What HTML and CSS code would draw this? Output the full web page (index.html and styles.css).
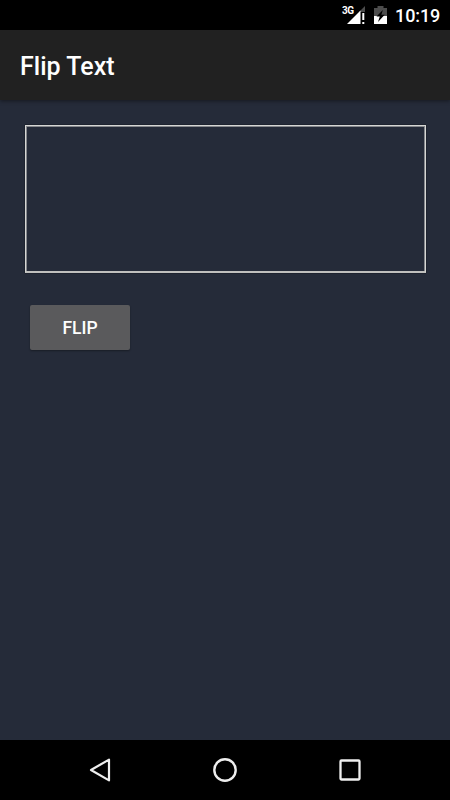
FILE: index.html
```
<!DOCTYPE html>
<html lang="en">
<head>
    <meta charset="UTF-8">
    <meta name="viewport" content="width=device-width, initial-scale=1.0">
    <title>Flip Text</title>
    <link rel="stylesheet" href="styles.css">
</head>
<body>
    <div class="status-bar">
        <div class="signal">
            <span class="network">3G</span>
            <svg width="18" height="18" viewBox="0 0 18 18">
                <path d="M12 6 18 0V6Z" fill="#4d4d4d"/>
                <path d="M0 18 13.5 4.5V18Z" fill="#fff"/>
                <path d="M15.3 7H17.3V14H15.3ZM15.3 16H17.3V18H15.3Z" fill="#fff"/>
            </svg>
        </div>
        <svg class="battery" width="13" height="18" viewBox="0 0 13 18">
            <path d="M3.5 0H9.5V2H13V10H0V2H3.5Z" fill="#4d4d4d"/>
            <path d="M0 10H13V18H0Z" fill="#fff"/>
            <path d="M8.8 4 2.5 10.6H5.8L4 16 10.7 8.8H7.4Z" fill="#000"/>
        </svg>
        <span class="time">10:19</span>
    </div>

    <div class="app-bar">
        <h1>Flip Text</h1>
    </div>

    <div class="content">
        <textarea class="text-box" id="flipInput"></textarea>
        <button onclick="flipText()">FLIP</button>
    </div>

    <div class="nav-bar">
        <svg width="24" height="26" viewBox="0 0 24 26">
            <path d="M21 2.6V23.4L3 13Z" fill="none" stroke="#eee" stroke-width="2.2" stroke-linejoin="round"/>
        </svg>
        <svg width="24" height="26" viewBox="0 0 24 26">
            <circle cx="12" cy="13" r="10.7" fill="none" stroke="#eee" stroke-width="2.4"/>
        </svg>
        <svg width="24" height="26" viewBox="0 0 24 26">
            <rect x="2.5" y="3.5" width="19" height="19" rx="1" fill="none" stroke="#eee" stroke-width="2.3"/>
        </svg>
    </div>

    <script>
        function flipText() {
            let box = document.getElementById('flipInput');
            box.value = box.value.split('').reverse().join('');
        }
    </script>
</body>
</html>
```
FILE: styles.css
```
body {
    font-family: Roboto, sans-serif;
    background-color: #252b39;
    color: white;
    margin: 0;
    height: 100vh;
    display: flex;
    flex-direction: column;
    overflow: hidden;
}
.status-bar {
    height: 30px;
    background: #000;
    display: flex;
    align-items: center;
    justify-content: flex-end;
    padding-right: 10px;
}
.signal {
    position: relative;
    height: 18px;
    margin-right: 9px;
}
.signal svg {
    display: block;
}
.network {
    position: absolute;
    left: -5px;
    top: 0;
    font-size: 10px;
    line-height: 9px;
    font-weight: bold;
    letter-spacing: -0.5px;
}
.battery {
    margin-right: 8px;
}
.time {
    width: 45px;
    font-size: 18px;
    line-height: 30px;
    font-weight: 500;
    letter-spacing: -0.1px;
    padding-top: 2px;
}
.app-bar {
    box-sizing: border-box;
    height: 70px;
    background: #212121;
    display: flex;
    align-items: center;
    padding: 3px 0 0 20px;
    box-shadow: 0 1px 4px rgba(0, 0, 0, 0.45);
}
h1 {
    margin: 0;
    font-size: 25px;
    font-weight: 500;
}
.content {
    flex: 1;
    display: flex;
    flex-direction: column;
    align-items: flex-start;
    padding: 25px;
}
.text-box {
    box-sizing: border-box;
    width: 401px;
    height: 148px;
    padding: 8px;
    border: 1px solid #d6d6d4;
    border-bottom: 2px solid #c0c0be;
    border-radius: 0;
    outline: none;
    resize: none;
    background: none;
    box-shadow: 0 0 1px #000, inset 1px 1px #85878c, inset -1px 0 #85878c;
    color: white;
    font: 22px Roboto, sans-serif;
}
button {
    width: 100px;
    height: 45px;
    margin: 32px 0 0 5px;
    padding: 1px 0 0;
    border: none;
    border-radius: 2px;
    background-color: #5a5a5c;
    box-shadow: 0 1px 2px rgba(0, 0, 0, 0.35);
    color: white;
    font: 500 17.5px Roboto, sans-serif;
}
.nav-bar {
    height: 60px;
    background: #000;
    display: flex;
    align-items: center;
    justify-content: center;
    gap: 101px;
}
```
